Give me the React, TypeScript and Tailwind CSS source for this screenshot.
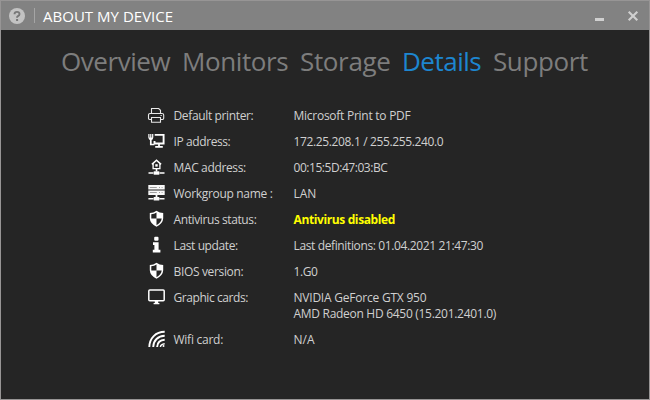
import type { ReactNode } from "react";

const Printer = () => (
  <svg width="18" height="18" viewBox="0 0 18 18" fill="none" stroke="#e8e8e8" strokeWidth="1.1">
    <path d="M4.5 7.5v-5h7.2l1.8 1.8v3.2M4.2 13.5H2.7q-1.2 0-1.2-1.2V9.1q0-1.6 1.6-1.6h12q1.6 0 1.6 1.6v3.2q0 1.2-1.2 1.2h-1.7M4.5 11.5h9v4.8h-9z" />
    <path d="M13.5 9.5h1.3" />
  </svg>
);

const IpDevice = () => (
  <svg width="18" height="18" viewBox="0 0 18 18" fill="none" stroke="#fff">
    <path d="M1.9 2v3.6q0 1.7 1.9 1.7t1.9-1.7V2M3.8 2v5" strokeWidth="1.2" />
    <path d="M2.2 5.5h3.2v2H2.2z" fill="#fff" stroke="none" />
    <path d="M3.8 7v5.5h3.6" strokeWidth="1.7" />
    <path d="M7.7 2.9h8.9v8.6H7.5V9" strokeWidth="1.9" />
    <path d="M12 11.5v2.8M8.2 14.9h7.6" strokeWidth="1.8" />
  </svg>
);

const MacDevice = () => (
  <svg width="18" height="18" viewBox="0 0 18 18" fill="none" stroke="#fff">
    <path d="M4.9 6.4l4.6-4.2 4.6 4.2" strokeWidth="1.5" />
    <path d="M6.1 5.6v5h6.8v-5" strokeWidth="1.3" />
    <path d="M8.3 6.2h2.4v2.4H8.3z" fill="#fff" stroke="none" />
    <path d="M9.5 10.5v3M1.5 15h5M12.5 15h5" strokeWidth="1.6" />
    <path d="M6.7 13.3h5.6v3.4H6.7z" fill="#fff" stroke="none" />
  </svg>
);

const Server = () => (
  <svg width="18" height="18" viewBox="0 0 18 18">
    <path d="M1.3 1h16.4v4.5H1.3zM1.3 6.4h16.4v4.5H1.3zM8.6 10.5h1.8v3H8.6zM1.4 14h5v1.6h-5zM12.5 14h5v1.6h-5zM6.7 13.1h5.6v3.4H6.7z" fill="#f7f7f7" />
    <path d="M2.8 3.5h7M2.8 8.5h7M12 3.5h1M14.6 3.5h1M12 8.5h1M14.6 8.5h1" stroke="#888" strokeWidth=".8" />
  </svg>
);

const Shield = () => (
  <svg width="18" height="18" viewBox="0 0 18 18">
    <path d="M9.5 .7Q12.6 3 16.2 3v5.3Q16 13.5 9.5 16.8 3 13.5 2.8 8.3V3Q6.4 3 9.5 .7z" fill="#fff" />
    <path d="M9.5 2.6v6H4.3V4.3Q7.3 4 9.5 2.6zM9.5 8.6h5.2q-.5 4-5.2 6.6z" fill="#252525" />
  </svg>
);

const InfoMark = () => (
  <svg width="18" height="18" viewBox="0 0 18 18" fill="#fff">
    <rect x="7.2" y=".8" width="4.3" height="4" rx="1" />
    <path d="M6 6.2h5.6v7.6h1.8v2.8H5.8v-2.8h1.6V8.9H6z" />
  </svg>
);

const Monitor = () => (
  <svg width="18" height="18" viewBox="0 0 18 18" fill="none" stroke="#fff">
    <rect x="1.8" y="2.1" width="15.4" height="10.6" rx="1" strokeWidth="1.5" />
    <path d="M7.8 13h3.4v2h1.2v1.2H6.6V15h1.2z" fill="#fff" stroke="none" />
  </svg>
);

const Wifi = () => (
  <svg width="18" height="18" viewBox="0 0 18 18" fill="none" stroke="#fff" strokeWidth="1.9">
    <path d="M2.3 17C2.5 8.3 8.7 1.8 17.7 1.8M6.2 17C6.4 10.5 11 6 17.7 5.8M10.1 17c.3-4.2 3.3-7 7.6-7.2" />
    <path d="M13.4 17q.4-3 4.3-3.3" strokeWidth="1.5" />
    <circle cx="16.5" cy="15.9" r="1" fill="#fff" stroke="none" />
  </svg>
);

const tabs = [
  { name: "Overview", style: "w-[121px] tracking-[-0.45px] text-[#7d7d7d]" },
  { name: "Monitors", style: "w-[118px] tracking-[-0.4px] text-[#7d7d7d]" },
  { name: "Storage", style: "w-[102px] tracking-[-0.35px] text-[#7d7d7d]" },
  { name: "Details", style: "w-[91px] tracking-[-0.5px] text-[#1d86d0]" },
  { name: "Support", style: "tracking-[-0.4px] text-[#7d7d7d]" },
];

interface Line {
  text: string;
  style: string;
}

interface Detail {
  icon: ReactNode;
  label: Line;
  values: Line[];
}

const details: Detail[] = [
  {
    icon: <Printer />,
    label: { text: "Default printer:", style: "tracking-[-0.36px]" },
    values: [{ text: "Microsoft Print to PDF", style: "tracking-[-0.26px]" }],
  },
  {
    icon: <IpDevice />,
    label: { text: "IP address:", style: "tracking-[-0.4px]" },
    values: [{ text: "172.25.208.1 / 255.255.240.0", style: "tracking-[-0.36px]" }],
  },
  {
    icon: <MacDevice />,
    label: { text: "MAC address:", style: "tracking-[-0.36px]" },
    values: [{ text: "00:15:5D:47:03:BC", style: "tracking-[-0.45px]" }],
  },
  {
    icon: <Server />,
    label: { text: "Workgroup name :", style: "tracking-[-0.32px]" },
    values: [{ text: "LAN", style: "" }],
  },
  {
    icon: <Shield />,
    label: { text: "Antivirus status:", style: "tracking-[-0.39px]" },
    values: [{ text: "Antivirus disabled", style: "tracking-[-0.38px] font-bold text-[#ffff00]" }],
  },
  {
    icon: <InfoMark />,
    label: { text: "Last update:", style: "tracking-[-0.38px]" },
    values: [{ text: "Last definitions: 01.04.2021 21:47:30", style: "tracking-[-0.37px]" }],
  },
  {
    icon: <Shield />,
    label: { text: "BIOS version:", style: "tracking-[-0.34px]" },
    values: [{ text: "1.G0", style: "tracking-[-0.4px]" }],
  },
  {
    icon: <Monitor />,
    label: { text: "Graphic cards:", style: "tracking-[-0.43px]" },
    values: [
      { text: "NVIDIA GeForce GTX 950", style: "tracking-[-0.22px]" },
      { text: "AMD Radeon HD 6450 (15.201.2401.0)", style: "tracking-[-0.29px]" },
    ],
  },
  {
    icon: <Wifi />,
    label: { text: "Wifi card:", style: "tracking-[-0.25px]" },
    values: [{ text: "N/A", style: "" }],
  },
];

export default function App() {
  return (
    <div className="h-[400px] w-[650px] overflow-hidden border border-[#979595] bg-[#252525] font-['Open_Sans',sans-serif] whitespace-nowrap">
      <header className="flex h-[29px] items-center bg-[#828282] pl-2">
        <svg width="16" height="16" viewBox="0 0 16 16">
          <circle cx="8" cy="8" r="8" fill="#c3c3c3" />
          <path d="M5.5 6.2Q5.6 3.9 8 3.9t2.5 2.1Q10.5 7.3 9 8.1 8 8.7 8 9.7" fill="none" stroke="#777" strokeWidth="1.9" />
          <path d="M7.1 11h2v2h-2z" fill="#777" />
        </svg>
        <span className="ml-[9px] h-[15px] w-px bg-[#a5a5a5]" />
        <h1 className="ml-[8px] text-[15px] leading-5 tracking-[0.02px] text-white">ABOUT MY DEVICE</h1>
        <svg className="ml-auto mr-[4px]" width="52" height="16" viewBox="0 0 52 16">
          <path d="M2 10h9v3H2z" fill="#d0d0d0" />
          <path d="M35.7 3.7l8.6 8.6m0-8.6l-8.6 8.6" stroke="#d0d0d0" strokeWidth="2.1" />
        </svg>
      </header>
      <nav className="mt-[13px] flex h-9 pl-[60px] text-[26px] leading-9">
        {tabs.map((tab) => (
          <span key={tab.name} className={tab.style}>{tab.name}</span>
        ))}
      </nav>
      <main className="mt-[29px] flex flex-col gap-[10px] pl-[146px] text-[12px] leading-4 text-[#d0d0d0]">
        {details.map((detail) => (
          <div key={detail.label.text} className="flex items-start">
            <span className="-mt-[2px] -mb-1 h-[18px] w-[26.5px]">{detail.icon}</span>
            <span className={`w-[120px] ${detail.label.style}`}>{detail.label.text}</span>
            <div>
              {detail.values.map((value) => (
                <div key={value.text} className={value.style}>{value.text}</div>
              ))}
            </div>
          </div>
        ))}
      </main>
    </div>
  );
}
